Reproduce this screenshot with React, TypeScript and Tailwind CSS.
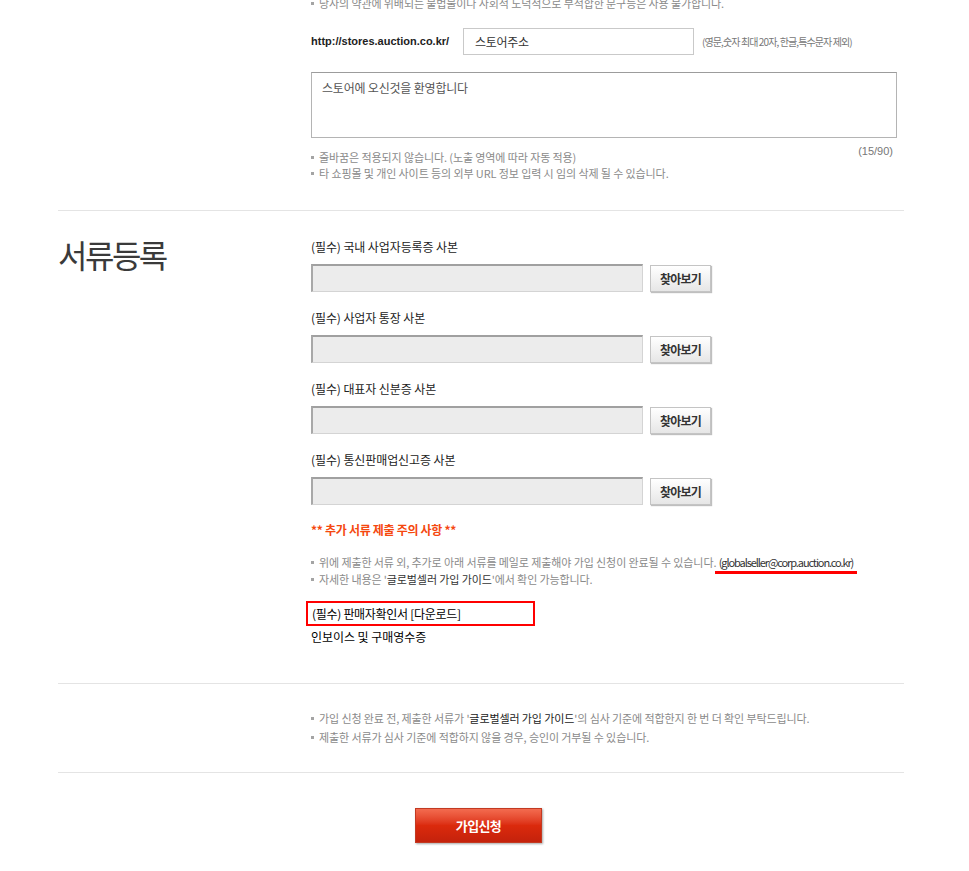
import React from 'react';

const KR = "font-['Noto_Sans_CJK_KR','Noto_Sans',sans-serif]";

const Bullet = ({ children, className = '' }: { children: React.ReactNode; className?: string }) => (
  <li className={`flex items-center ${className}`}>
    <span className="inline-block w-[3px] h-[3px] bg-[#a4a4a4] mr-[5px] shrink-0" />
    <span>{children}</span>
  </li>
);

const FileRow = ({ label }: { label: string }) => (
  <div>
    <p className="h-[16px] leading-[16px] text-[12px] tracking-[-0.1px] text-[#222]">{label}</p>
    <div className="flex items-start mt-[9px]">
      <div className="w-[332px] h-[28px] bg-[#ececec] border-t-2 border-l-2 border-t-[#a0a0a0] border-l-[#a8a8a8] border-b border-r border-b-[#d4d4d4] border-r-[#d4d4d4]" />
      <button className="ml-[7px] mt-[1px] w-[61px] h-[27px] border border-[#c4c4c4] bg-gradient-to-b from-white to-[#e6e6e6] shadow-[1px_1px_1px_rgba(0,0,0,0.25)] text-[12px] font-bold tracking-[-0.8px] text-[#333]">
        찾아보기
      </button>
    </div>
  </div>
);

export default function App() {
  return (
    <div className={`w-[969px] h-[871px] overflow-hidden bg-white ${KR}`}>
      <div className="ml-[58px] w-[846px]">
        {/* 스토어 주소 / 소개 */}
        <div className="pl-[253px] pb-[29px] border-b border-[#e4e4e4]">
          <ul className="-mt-[5px] text-[11px] leading-[16px] tracking-[-0.1px] text-[#8a8a8a]">
            <Bullet>당사의 약관에 위배되는 불법물이나 사회적 도덕적으로 부적합한 문구등은 사용 불가합니다.</Bullet>
          </ul>

          <div className="flex items-center mt-[17px] h-[27px]">
            <span className="w-[152px] font-['Liberation_Sans',sans-serif] font-bold text-[11px] text-[#222]">
              http://stores.auction.co.kr/
            </span>
            <div className="w-[231px] h-[27px] border border-[#c9c9c9] flex items-center pl-[11px] text-[12px] tracking-[-0.3px] text-[#333]">
              스토어주소
            </div>
            <span className="ml-[8px] text-[10px] tracking-[-0.9px] text-[#777]">
              (영문,숫자 최대 20자, 한글,특수문자 제외)
            </span>
          </div>

          <div className="mt-[17px] w-[586px] h-[66px] border border-[#b4b4b4] border-t-[#9c9c9c] px-[10px] py-[6px] text-[12px] tracking-[-0.2px] text-[#555]">
            스토어에 오신것을 환영합니다
          </div>

          <div className="flex justify-between w-[586px]">
            <ul className="mt-[11px] text-[11px] leading-[16px] tracking-[-0.1px] text-[#8a8a8a]">
              <Bullet>줄바꿈은 적용되지 않습니다. (노출 영역에 따라 자동 적용)</Bullet>
              <Bullet>타 쇼핑몰 및 개인 사이트 등의 외부 URL 정보 입력 시 임의 삭제 될 수 있습니다.</Bullet>
            </ul>
            <span className="mt-[5px] mr-[4px] leading-[16px] text-[11px] text-[#777] font-['Liberation_Sans',sans-serif]">(15/90)</span>
          </div>
        </div>

        {/* 서류등록 */}
        <div className="flex pb-[38px] border-b border-[#e4e4e4]">
          <h2 className="w-[253px] shrink-0 mt-[23px] text-[32px] leading-[40px] tracking-[-2.5px] text-[#3a3a3a] font-normal">
            서류등록
          </h2>
          <div className="mt-[28px]">
            <div className="flex flex-col gap-[18px]">
              <FileRow label="(필수) 국내 사업자등록증 사본" />
              <FileRow label="(필수) 사업자 통장 사본" />
              <FileRow label="(필수) 대표자 신분증 사본" />
              <FileRow label="(필수) 통신판매업신고증 사본" />
            </div>

            <p className="mt-[17px] h-[16px] leading-[16px] text-[12px] font-bold tracking-[-0.3px] text-[#f5480f]">
              ** 추가 서류 제출 주의 사항 **
            </p>

            <ul className="mt-[16px] text-[11px] leading-[17px] tracking-[-0.1px] text-[#8a8a8a]">
              <Bullet>
                위에 제출한 서류 외, 추가로 아래 서류를 메일로 제출해야 가입 신청이 완료될 수 있습니다.{' '}
                <span className="relative text-[#333] tracking-[-1.1px]">
                  (globalseller@corp.auction.co.kr)
                  <span className="absolute -left-[4px] -right-[4px] top-[17px] h-[3px] bg-[#ff0000]" />
                </span>
              </Bullet>
              <Bullet>
                자세한 내용은 '<span className="text-[#333]">글로벌셀러 가입 가이드</span>'에서 확인 가능합니다.
              </Bullet>
            </ul>

            <div className="mt-[13px] -ml-[5px] w-[229px] h-[25px] border-2 border-[#ff0000] pl-[4px] flex items-center text-[12px] tracking-[-0.3px] text-[#000]">
              (필수) 판매자확인서 [다운로드]
            </div>
            <p className="mt-[3px] h-[16px] leading-[16px] text-[12px] tracking-[-0.05px] text-[#000]">
              인보이스 및 구매영수증
            </p>
          </div>
        </div>

        {/* 안내 */}
        <div className="pl-[253px] pt-[25px] pb-[25px] border-b border-[#e4e4e4]">
          <ul className="text-[11px] leading-[19px] tracking-[-0.1px] text-[#8a8a8a]">
            <Bullet>
              가입 신청 완료 전, 제출한 서류가 '<span className="text-[#222]">글로벌셀러 가입 가이드</span>'의 심사 기준에 적합한지 한 번 더 확인 부탁드립니다.
            </Bullet>
            <Bullet>제출한 서류가 심사 기준에 적합하지 않을 경우, 승인이 거부될 수 있습니다.</Bullet>
          </ul>
        </div>

        <div className="mt-[35px] ml-[357px]">
          <button className="w-[127px] h-[35px] bg-gradient-to-b from-[#f36b4f] via-[#db2a0c] to-[#c4220c] border border-[#c23a22] shadow-[1px_1px_2px_rgba(0,0,0,0.35)] text-white text-[13px] font-bold tracking-[-0.6px]">
            가입신청
          </button>
        </div>
      </div>
    </div>
  );
}
